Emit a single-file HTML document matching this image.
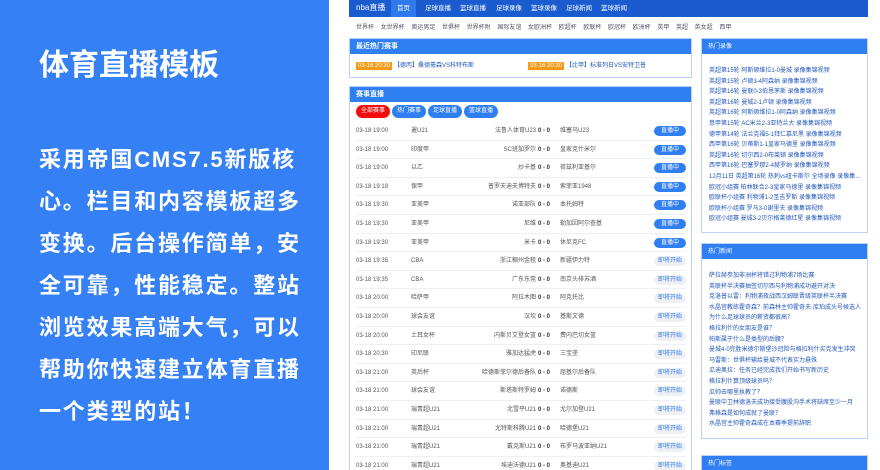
<!DOCTYPE html>
<html style="overflow:hidden;width:880px;height:470px"><head><meta charset="utf-8"><style>
*{margin:0;padding:0;box-sizing:border-box}
body{width:880px;height:470px;overflow:hidden;background:#fff;position:relative;font-family:"Liberation Sans","Noto Sans CJK SC",sans-serif}
.panel{position:absolute;left:0;top:0;width:329px;height:470px;background:#3580f5;color:#fff}
.panel h1{position:absolute;left:39px;top:48px;font-size:30px;font-weight:bold;white-space:nowrap;line-height:36px}
.panel p{position:absolute;left:39px;top:139px;font-size:22px;letter-spacing:1.8px;line-height:42px;font-weight:bold;white-space:nowrap}
.nav{position:absolute;left:349px;top:0;width:519px;height:17px;background:#1a5bd0;color:#fff;font-size:6.5px;line-height:8px}
.nav span{position:absolute;top:5px}
.nav .on{background:#2f78ee;top:0;height:17px;padding:5px 6px 0}
.sub{position:absolute;left:356px;top:24px;font-size:6px;line-height:8px;color:#556;white-space:nowrap;word-spacing:5px}
.box{position:absolute;border:1px solid #b9d1f6;background:#fff;overflow:hidden}
.hd{background:#2f7ff2;color:#fff;font-size:7px;line-height:8px;font-weight:bold;height:15px;padding:4px 6px}
.hot{left:349px;top:38px;width:343px;height:40px}
.tag{position:absolute;top:23px;font-size:6px;line-height:8px;color:#2356b8;white-space:nowrap}
.tag b{background:#f39b17;color:#fff;font-weight:normal;padding:1px 2px;margin-right:2px}
.live{left:349px;top:86px;width:343px;height:384px;border-bottom:none}
.tabs{position:absolute;top:18px;left:6px;display:flex;gap:2px}
.tabs span{display:block;height:13px;border-radius:7px;background:#2f7ff2;color:#fff;font-size:6px;line-height:7px;padding:3px 5px}
.tabs span.r{background:#f30c0c}
.row{position:absolute;left:6px;width:330px;height:18.6px;border-bottom:1px solid #eceff3;font-size:6px;color:#555}
.row span{position:absolute;top:5px;line-height:8px;white-space:nowrap}
.t{left:0}.l{left:55px}.h{right:150px;text-align:right}.s{left:182px;font-weight:bold;color:#333}.a{left:204px}
.row .btn{right:0;top:4px;width:32px;height:10px;border-radius:5px;text-align:center;padding-top:1px}
.b1{background:#2f7ff2;color:#fff}.b2{background:#eef0f3;color:#2f7ff2}
.side{left:701px;width:167px}
.list{padding:12px 0 0 7px;font-size:6px;color:#2356b8;line-height:10.6px;white-space:nowrap;overflow:hidden}
</style></head><body>
<div class="panel"><h1>体育直播模板</h1>
<p>采用帝国CMS7.5新版核<br>心。栏目和内容模板超多<br>变换。后台操作简单，安<br>全可靠，性能稳定。整站<br>浏览效果高端大气，可以<br>帮助你快速建立体育直播<br>一个类型的站！</p></div>
<div class="nav"><span style="left:7px;font-size:8px;top:4px">nba直播</span><span class="on" style="left:42px">首页</span><span style="left:76px">足球直播</span><span style="left:111px">篮球直播</span><span style="left:147px">足球录像</span><span style="left:182px">篮球录像</span><span style="left:217px">足球新闻</span><span style="left:252px">篮球新闻</span></div>
<div class="sub">世界杯 女世界杯 奥运男足 世俱杯 世界杯附 国际友谊 女欧洲杯 欧超杯 欧联杯 欧冠杯 欧洲杯 英甲 英超 英女超 西甲</div>
<div class="box hot"><div class="hd">最近热门赛事</div>
<div class="tag" style="left:6px"><b>03-16 20:30</b>【德丙】桑德豪森VS科特布斯</div>
<div class="tag" style="left:178px"><b>03-16 20:30</b>【比甲】标准列日VS安特卫普</div></div>
<div class="box live"><div class="hd">赛事直播</div>
<div class="tabs"><span class="r">全部赛事</span><span>热门赛事</span><span>足球直播</span><span>篮球直播</span></div>
<div class="row" style="top:35px"><span class="t">03-18 19:00</span><span class="l">暹U21</span><span class="h">法鲁人体育U23</span><span class="s">0 - 0</span><span class="a">维塞乌U23</span><span class="btn b1">直播中</span></div>
<div class="row" style="top:53.6px"><span class="t">03-18 19:00</span><span class="l">印度甲</span><span class="h">SC班加罗尔</span><span class="s">0 - 0</span><span class="a">皇家克什米尔</span><span class="btn b1">直播中</span></div>
<div class="row" style="top:72.2px"><span class="t">03-18 19:00</span><span class="l">以乙</span><span class="h">炒卡基</span><span class="s">0 - 0</span><span class="a">荷兹利亚基尔</span><span class="btn b1">直播中</span></div>
<div class="row" style="top:90.8px"><span class="t">03-18 19:18</span><span class="l">保甲</span><span class="h">普罗夫迪夫博特夫</span><span class="s">0 - 0</span><span class="a">索菲亚1948</span><span class="btn b1">直播中</span></div>
<div class="row" style="top:109.4px"><span class="t">03-18 19:30</span><span class="l">亚美甲</span><span class="h">诺亚部队</span><span class="s">0 - 0</span><span class="a">本托姆特</span><span class="btn b1">直播中</span></div>
<div class="row" style="top:128px"><span class="t">03-18 19:30</span><span class="l">亚美甲</span><span class="h">尼维</span><span class="s">0 - 0</span><span class="a">勒加因阿尔查基</span><span class="btn b1">直播中</span></div>
<div class="row" style="top:146.6px"><span class="t">03-18 19:30</span><span class="l">亚美甲</span><span class="h">米卡</span><span class="s">0 - 0</span><span class="a">休尼克FC</span><span class="btn b1">直播中</span></div>
<div class="row" style="top:165.2px"><span class="t">03-18 19:35</span><span class="l">CBA</span><span class="h">浙江稠州金租</span><span class="s">0 - 0</span><span class="a">新疆伊力特</span><span class="btn b2">即将开始</span></div>
<div class="row" style="top:183.8px"><span class="t">03-18 19:35</span><span class="l">CBA</span><span class="h">广东东莞</span><span class="s">0 - 0</span><span class="a">南京头排苏酒</span><span class="btn b2">即将开始</span></div>
<div class="row" style="top:202.4px"><span class="t">03-18 20:00</span><span class="l">哈萨甲</span><span class="h">阿拉木图</span><span class="s">0 - 0</span><span class="a">阿克托比</span><span class="btn b2">即将开始</span></div>
<div class="row" style="top:221px"><span class="t">03-18 20:00</span><span class="l">球会友谊</span><span class="h">汉坎</span><span class="s">0 - 0</span><span class="a">基斯文德</span><span class="btn b2">即将开始</span></div>
<div class="row" style="top:239.6px"><span class="t">03-18 20:00</span><span class="l">土耳女杯</span><span class="h">内斯贝艾登女篮</span><span class="s">0 - 0</span><span class="a">费内巴切女篮</span><span class="btn b2">即将开始</span></div>
<div class="row" style="top:258.2px"><span class="t">03-18 20:30</span><span class="l">印尼联</span><span class="h">雅加达猛虎</span><span class="s">0 - 0</span><span class="a">三宝垄</span><span class="btn b2">即将开始</span></div>
<div class="row" style="top:276.8px"><span class="t">03-18 21:00</span><span class="l">英后杯</span><span class="h">哈德斯菲尔德后备队</span><span class="s">0 - 0</span><span class="a">屈基尔后备队</span><span class="btn b2">即将开始</span></div>
<div class="row" style="top:295.4px"><span class="t">03-18 21:00</span><span class="l">球会友谊</span><span class="h">斯塔斯特罗姆</span><span class="s">0 - 0</span><span class="a">诺德斯</span><span class="btn b2">即将开始</span></div>
<div class="row" style="top:314px"><span class="t">03-18 21:00</span><span class="l">瑞青超U21</span><span class="h">北雪平U21</span><span class="s">0 - 0</span><span class="a">尤尔加登U21</span><span class="btn b2">即将开始</span></div>
<div class="row" style="top:332.6px"><span class="t">03-18 21:00</span><span class="l">瑞青超U21</span><span class="h">尤特斯科腾U21</span><span class="s">0 - 0</span><span class="a">哈德堡U21</span><span class="btn b2">即将开始</span></div>
<div class="row" style="top:351.2px"><span class="t">03-18 21:00</span><span class="l">瑞青超U21</span><span class="h">戴克斯U21</span><span class="s">0 - 0</span><span class="a">布罗马波亚纳U21</span><span class="btn b2">即将开始</span></div>
<div class="row" style="top:369.8px"><span class="t">03-18 21:00</span><span class="l">瑞青超U21</span><span class="h">埃迪沃德U21</span><span class="s">0 - 0</span><span class="a">奥基迪U21</span><span class="btn b2">即将开始</span></div>
</div>
<div class="box side" style="top:38px;height:195px"><div class="hd" style="font-weight:normal;font-size:6px">热门录像</div>
<div class="list">英超第15轮 阿斯顿维拉1-0曼城 录像集锦视频<br>英超第15轮 卢顿3-4阿森纳 录像集锦视频<br>英超第16轮 曼联0-3伯恩茅斯 录像集锦视频<br>英超第16轮 曼城2-1卢顿 录像集锦视频<br>英超第16轮 阿斯顿维拉1-0阿森纳 录像集锦视频<br>意甲第15轮 AC米兰2-3亚特兰大 录像集锦视频<br>德甲第14轮 法兰克福5-1拜仁慕尼黑 录像集锦视频<br>西甲第16轮 贝蒂斯1-1皇家马德里 录像集锦视频<br>英超第16轮 切尔西2-0布莱顿 录像集锦视频<br>西甲第16轮 巴塞罗那2-4赫罗纳 录像集锦视频<br>12月11日 英超第16轮 热刺vs纽卡斯尔 全场录像 录像集...<br>欧冠小组赛 柏林联合2-3皇家马德里 录像集锦视频<br>欧联杯小组赛 利物浦1-2圣吉罗斯 录像集锦视频<br>欧联杯小组赛 罗马3-0谢里夫 录像集锦视频<br>欧冠小组赛 曼城3-2贝尔格莱德红星 录像集锦视频</div></div>
<div class="box side" style="top:243px;height:196px"><div class="hd" style="font-weight:normal;font-size:6px">热门新闻</div>
<div class="list">萨拉赫参加非洲杯将错过利物浦7场比赛<br>英联杯半决赛抽签切尔西与利物浦成功避开对决<br>克洛普以雷：利物浦夜战西汉姆联晋级英联杯半决赛<br>水晶宫教练霍奇森？前森林主帅霍奇夫·库珀成头号候选人<br>为什么足球球员的薪资都很高？<br>格拉利什的女朋友是谁？<br>帕斯属于什么是类型的后腰？<br>曼城4-0完胜米德尔斯堡沙冠险与格拉利什买克发生冲突<br>马雷斯：世俱杯输给曼城不代表实力悬殊<br>瓜迪奥拉：任务已经完成我们开始书写新历史<br>格拉利什算顶级球员吗？<br>瓜帅去哪里执教了？<br>曼联中卫林德洛夫成功接受腹股沟手术将缺席至少一月<br>弗格森是如何成就了曼联？<br>水晶宫主帅霍奇森成在本赛季提前辞职</div></div>
<div class="box side" style="top:455px;height:15px;border-bottom:none"><div class="hd" style="font-weight:normal;font-size:6px">热门标签</div></div>
</body></html>
